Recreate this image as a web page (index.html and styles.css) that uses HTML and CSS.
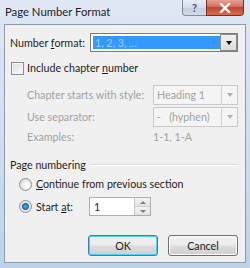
FILE: index.html
```html
<!DOCTYPE html>
<html lang="en">
<head>
<meta charset="UTF-8" />
<title>Page Number Format</title>
<link rel="stylesheet" href="styles.css">
</head>
<body>
<div class="window">
  <div class="titlebar">
    <span class="title">Page Number Format</span>
    <div class="caption-buttons">
      <span class="cap-btn help">?</span>
      <span class="cap-btn close">
        <svg width="12" height="10" viewBox="0 0 12 10"><path d="M2 1 L10 9 M10 1 L2 9" stroke="#fff" stroke-width="2.4" stroke-linecap="square"/></svg>
      </span>
    </div>
  </div>

  <div class="client">
    <div class="row format-row">
      <label class="lbl">Number <u>f</u>ormat:</label>
      <div class="combo active">
        <span class="combo-value selected">1, 2, 3, ...</span>
        <span class="combo-btn"><i class="arrow"></i></span>
      </div>
    </div>

    <div class="row check-row">
      <span class="checkbox"></span>
      <span>Include chapter <u>n</u>umber</span>
    </div>

    <div class="sub">
      <div class="row sub-row first">
        <span class="sub-lbl">Chapter starts with style:</span>
        <div class="combo off">
          <span class="combo-value">Heading 1</span>
          <span class="combo-btn"><i class="arrow"></i></span>
        </div>
      </div>
      <div class="row sub-row">
        <span class="sub-lbl">Use separator:</span>
        <div class="combo off">
          <span class="combo-value">-&nbsp;&nbsp;&nbsp;(hyphen)</span>
          <span class="combo-btn"><i class="arrow"></i></span>
        </div>
      </div>
      <div class="row examples-row">
        <span class="sub-lbl">Examples:</span>
        <span>1-1, 1-A</span>
      </div>
    </div>

    <div class="group-head">
      <span>Page numbering</span>
      <span class="rule"></span>
    </div>

    <div class="row radio-row continue-row">
      <span class="radio"></span>
      <span><u>C</u>ontinue from previous section</span>
    </div>
    <div class="row radio-row start-row">
      <span class="radio on"></span>
      <span class="start-lbl">Start <u>a</u>t:</span>
      <div class="spin">
        <span class="spin-value">1</span>
        <span class="spin-btns">
          <span class="spin-btn"><i class="up"></i></span>
          <span class="spin-btn"><i class="down"></i></span>
        </span>
      </div>
    </div>

    <div class="buttons">
      <span class="btn default">OK</span>
      <span class="btn">Cancel</span>
    </div>
  </div>
</div>
</body>
</html>
```

FILE: styles.css
```css
body {
  margin: 0;
  font-family: Lato, "Noto Sans", sans-serif;
  font-size: 10.7px;
  line-height: 14px;
  color: #1e1e1e;
  white-space: nowrap;
}
u {
  text-decoration: underline;
  text-underline-offset: 1px;
}
.window {
  width: 250px;
  height: 268px;
  box-sizing: border-box;
  background: linear-gradient(180deg, #dfe8f3 0%, #d3e0ee 40%, #bcd3ea 100%);
  display: flex;
  flex-direction: column;
}
.titlebar {
  height: 24px;
  flex-shrink: 0;
  display: flex;
  justify-content: space-between;
  align-items: flex-start;
  padding-left: 5px;
  padding-right: 6px;
}
.title {
  font-size: 11.3px;
  color: #1b1b2a;
  line-height: 24px;
}
.caption-buttons {
  display: flex;
  flex-shrink: 0;
}
.cap-btn {
  height: 16px;
  display: flex;
  align-items: center;
  justify-content: center;
  border: 1px solid #7f8b9c;
  border-top: none;
  box-sizing: border-box;
}
.help {
  width: 24px;
  border-radius: 0 0 0 4px;
  border-right: none;
  background: linear-gradient(180deg, #e6edf5 0%, #d3dde9 50%, #c2cfdf 51%, #cfdbe9 100%);
  color: #4a5668;
  font-size: 11px;
  font-weight: bold;
}
.close {
  width: 38px;
  border-radius: 0 0 4px 0;
  border-color: #7b2e26;
  background: linear-gradient(180deg, #e7a294 0%, #d56d5b 45%, #c44530 50%, #d86f4f 100%);
}
.client {
  flex: 1;
  margin: 0 4px 5px 4px;
  border: 1px solid #8c9aab;
  background: #f0f0f0;
  padding: 8px 7px 0 5px;
  box-sizing: border-box;
}
.row {
  display: flex;
  align-items: center;
}
.lbl {
  width: 80px;
  flex-shrink: 0;
}
.combo {
  display: flex;
  height: 19px;
  border: 1px solid #abadb3;
  background: #fff;
  box-sizing: border-box;
}
.combo.active {
  width: 148px;
  border-color: #7a7a7a;
  padding: 2px 0 2px 2px;
}
.combo-value {
  flex: 1;
  display: flex;
  align-items: center;
  padding-left: 2px;
}
.combo-value.selected {
  background: #3399ff;
  color: #9fd0ff;
}
.combo-btn {
  width: 15px;
  display: flex;
  align-items: center;
  justify-content: center;
  border-left: 1px solid #b5b5b5;
  background: linear-gradient(180deg, #f2f2f2, #dcdcdc);
}
.combo.active .combo-btn {
  margin: -2px 0;
  border: 1px solid #8d8d8d;
}
.arrow {
  width: 0;
  height: 0;
  border-left: 3.5px solid transparent;
  border-right: 3.5px solid transparent;
  border-top: 4px solid #000;
}
.combo.off {
  width: 86px;
  height: 20px;
  border-color: #c8c8c8;
  background: #f4f4f4;
}
.combo.off .combo-value {
  padding-left: 3px;
}
.combo.off .combo-btn {
  border-left: 1px solid #d2d2d2;
  background: #f4f4f4;
}
.combo.off .arrow {
  border-top-color: #b0b0b0;
}
.check-row {
  margin-top: 9px;
  margin-left: 1px;
  gap: 3px;
}
.checkbox {
  width: 13px;
  height: 13px;
  box-sizing: border-box;
  border: 1px solid #8e8f8f;
  background: linear-gradient(135deg, #dcdcdc, #fcfcfc);
  box-shadow: inset 0 0 0 1px #f4f4f4;
}
.sub {
  padding-left: 17px;
  color: #a2a2a2;
}
.sub-row {
  margin-top: 2px;
}
.sub-row.first {
  margin-top: 10px;
}
.sub-lbl {
  width: 126px;
  flex-shrink: 0;
}
.examples-row {
  margin-top: 3px;
}
.group-head {
  display: flex;
  align-items: center;
  gap: 4px;
  margin-top: 14px;
}
.rule {
  flex: 1;
  height: 1px;
  background: #dcdcdc;
  border-bottom: 1px solid #fff;
}
.radio-row {
  gap: 4px;
  padding-left: 9px;
}
.continue-row {
  margin-top: 5px;
}
.radio {
  width: 13px;
  height: 13px;
  box-sizing: border-box;
  border-radius: 50%;
  border: 1px solid #8e8f8f;
  background: radial-gradient(circle at 60% 60%, #fcfcfc 20%, #d6d6d6 80%);
}
.radio.on {
  background: radial-gradient(circle, #5bb5e6 0, #1e6aa6 3px, #dfe8ee 4px, #f6f6f6 100%);
}
.start-row {
  margin-top: 6px;
}
.start-lbl {
  width: 49px;
  flex-shrink: 0;
}
.spin {
  display: flex;
  width: 62px;
  height: 19px;
  border: 1px solid #abadb3;
  background: #fff;
  box-sizing: border-box;
}
.spin-value {
  flex: 1;
  padding-left: 4px;
  display: flex;
  align-items: center;
}
.spin-btns {
  width: 15px;
  display: flex;
  flex-direction: column;
  border-left: 1px solid #c9c9c9;
}
.spin-btn {
  flex: 1;
  display: flex;
  align-items: center;
  justify-content: center;
  background: linear-gradient(180deg, #f4f4f4, #e2e2e2);
  border-bottom: 1px solid #d0d0d0;
}
.spin-btn:last-child {
  border-bottom: none;
}
.up, .down {
  width: 0;
  height: 0;
  border-left: 3px solid transparent;
  border-right: 3px solid transparent;
}
.up {
  border-bottom: 3px solid #7d7d7d;
}
.down {
  border-top: 3px solid #7d7d7d;
}
.buttons {
  display: flex;
  justify-content: flex-end;
  gap: 10px;
  margin-top: 19px;
}
.btn {
  width: 70px;
  height: 21px;
  box-sizing: border-box;
  display: flex;
  align-items: center;
  justify-content: center;
  border: 1px solid #707070;
  border-radius: 3px;
  background: linear-gradient(180deg, #f2f2f2 0%, #ebebeb 48%, #dddddd 52%, #cfcfcf 100%);
  box-shadow: inset 0 0 0 1px #fbfbfb;
}
.btn.default {
  border-color: #3c7fb1;
  box-shadow: inset 0 0 0 1px #48d0ff;
}
```
